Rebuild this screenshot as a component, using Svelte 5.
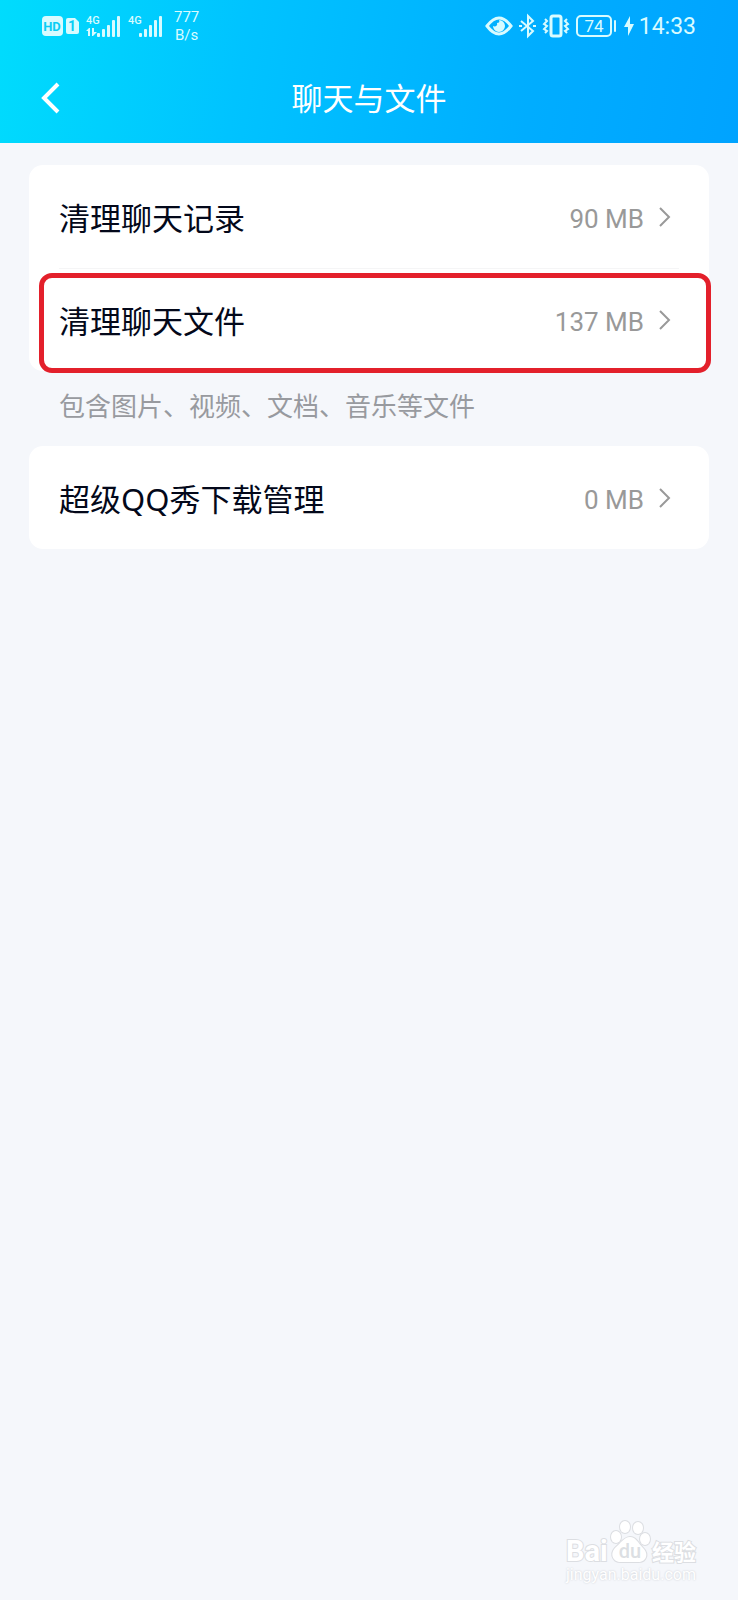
<script>
  const groups = [
    {
      note: '包含图片、视频、文档、音乐等文件',
      items: [
        { label: '清理聊天记录', size: '90 MB' },
        { label: '清理聊天文件', size: '137 MB', marked: true },
      ],
    },
    {
      items: [{ label: '超级QQ秀下载管理', size: '0 MB' }],
    },
  ];
</script>

{#snippet bars()}
  <rect x="11" y="18" width="3" height="4" rx="1" />
  <rect x="16" y="14" width="3" height="8" rx="1" />
  <rect x="21" y="10" width="3" height="12" rx="1" />
  <rect x="26" y="5" width="3" height="17" rx="1" />
  <rect x="31" y="1" width="3" height="21" rx="1" />
{/snippet}

<div class="page">
  <header class="header">
    <div class="status">
      <div class="status__left">
        <svg width="37" height="20" viewBox="0 0 37 20" fill="currentColor">
          <rect width="21" height="20" rx="4" />
          <path d="M26 2h7l4 4v10a2 2 0 0 1-2 2h-9a2 2 0 0 1-2-2V4a2 2 0 0 1 2-2z" />
          <text class="cut" x="10" y="15" font-size="13">HD</text>
          <text class="cut" x="30" y="15" font-size="14">1</text>
        </svg>
        <svg class="signal" width="35" height="23" viewBox="0 0 35 23" fill="currentColor">
          <text x="0" y="9" font-size="11">4G</text>
          <path d="M0 16l3-3h1v8H2v-5zM6 13h2v4h3l-4 4H6z" />
          {@render bars()}
        </svg>
        <svg class="signal" width="35" height="23" viewBox="0 0 35 23" fill="currentColor">
          <text x="0" y="9" font-size="11">4G</text>
          {@render bars()}
        </svg>
        <div class="speed"><span>777</span><span>B/s</span></div>
      </div>

      <div class="status__right">
        <svg width="26" height="20" viewBox="0 0 26 20">
          <path d="M1 10Q13-6 25 10Q13 26 1 10z" fill="none" stroke="currentColor" stroke-width="3" />
          <path d="M13 4a6 6 0 1 1-6 6c2 1 5 0 4-3 2 0 3-1 2-3z" fill="currentColor" />
        </svg>
        <svg width="17" height="24" viewBox="0 0 17 24" fill="none" stroke="currentColor" stroke-width="2">
          <path d="M2 7l12 10-5 5V2l5 5L2 17" />
          <path d="M0 12h3M14 12h3" />
        </svg>
        <svg width="26" height="22" viewBox="0 0 26 22" fill="none" stroke="currentColor" stroke-width="2">
          <rect x="8" y="1" width="10" height="20" rx="2" stroke-width="3" />
          <path d="M2 4l2 2-3 3 3 2-3 3 3 2-2 2M24 4l-2 2 3 3-3 2 3 3-3 2 2 2" />
        </svg>
        <svg width="41" height="22" viewBox="0 0 41 22">
          <rect x="1" y="1" width="34" height="20" rx="4" fill="none" stroke="currentColor" stroke-width="2" />
          <path d="M39 6v10" stroke="currentColor" stroke-width="2" stroke-linecap="round" />
          <text x="18" y="17" font-size="17" fill="currentColor" text-anchor="middle">74</text>
        </svg>
        <svg width="10" height="20" viewBox="0 0 10 20" fill="currentColor">
          <path d="M6 0v8h4L4 20v-9H0z" />
        </svg>
        <span class="time">14:33</span>
      </div>
    </div>

    <nav class="nav">
      <button class="back" type="button" aria-label="返回">
        <svg width="20" height="32" viewBox="0 0 20 32" fill="none" stroke="currentColor" stroke-width="4">
          <path d="M18 2L4 16l14 14" />
        </svg>
      </button>
      <h1 class="title">聊天与文件</h1>
    </nav>
  </header>

  <main class="content">
    {#each groups as group}
      <section class="group">
        <div class="card">
          {#each group.items as item}
            <button class="row" class:row--marked={item.marked} type="button">
              <span class="label">{item.label}</span>
              <span class="size">{item.size}</span>
              <svg class="arrow" width="12" height="20" viewBox="0 0 12 20" fill="none" stroke="currentColor" stroke-width="2">
                <path d="M1 1l9 9-9 9" />
              </svg>
            </button>
          {/each}
        </div>
        {#if group.note}
          <p class="note">{group.note}</p>
        {/if}
      </section>
    {/each}
  </main>

  <footer class="watermark">
    <svg width="132" height="46" viewBox="0 0 132 46">
      <g class="outline">
        <text x="0" y="41" font-size="29">Bai</text>
        <ellipse cx="50" cy="17" rx="5" ry="6" />
        <ellipse cx="59" cy="7" rx="5" ry="6" />
        <ellipse cx="72" cy="8" rx="5" ry="6" />
        <ellipse cx="79" cy="19" rx="5" ry="6" />
        <path d="M64 17c6 0 8 6 13 11 7 7 2 15-6 14H56c-8 1-13-7-7-14 6-5 9-11 15-11z" />
        <text class="cn" x="86" y="40" font-size="22">经验</text>
      </g>
      <text class="du" x="64" y="38" font-size="20">du</text>
    </svg>
    <span class="site">jingyan.baidu.com</span>
  </footer>
</div>

<style>
  :global(body) {
    margin: 0;
  }

  .page {
    min-height: 100vh;
    display: flex;
    flex-direction: column;
    background: #f5f7fb;
    font-family: Roboto, 'Noto Sans CJK SC', sans-serif;
  }

  svg {
    display: block;
    flex: none;
    overflow: visible;
  }

  .header {
    height: 143px;
    background: linear-gradient(100deg, #00dcfd 0%, #00c3ff 33%, #00adff 72%, #00a3ff 100%);
    color: #fff;
  }

  .status {
    display: flex;
    justify-content: space-between;
    height: 52px;
    padding: 0 42px;
    color: #d8fbff;
  }

  .status__left,
  .status__right {
    display: flex;
    align-items: center;
    gap: 7px;
  }

  .cut {
    fill: #0bcdf5;
    font-weight: 700;
    text-anchor: middle;
  }

  .signal {
    font-weight: 500;
  }

  .signal + .signal {
    margin-right: 4px;
  }

  .speed {
    display: flex;
    flex-direction: column;
    align-items: center;
    font-size: 15px;
    line-height: 18px;
  }

  .time {
    margin-left: -2px;
    font-size: 23px;
  }

  .nav {
    position: relative;
    display: flex;
    align-items: center;
    justify-content: center;
    height: 91px;
  }

  .back {
    position: absolute;
    left: 32px;
    padding: 8px;
    border: 0;
    background: transparent;
    color: inherit;
    cursor: pointer;
  }

  .title {
    margin: 0;
    padding-top: 4px;
    font-size: 31px;
    font-weight: 400;
    line-height: 44px;
  }

  .content {
    padding: 22px 29px;
  }

  .card {
    border-radius: 14px;
    background: #fff;
  }

  .row {
    position: relative;
    display: flex;
    align-items: center;
    width: 100%;
    height: 103px;
    padding: 0 38px 0 30px;
    border: 0;
    background: transparent;
    font-family: inherit;
    text-align: left;
    cursor: pointer;
  }

  .row + .row::before {
    content: '';
    position: absolute;
    top: 0;
    left: 30px;
    right: 30px;
    height: 1px;
    background: #f5f5f6;
  }

  .row--marked::after {
    content: '';
    position: absolute;
    inset: 5px -2px -2px 10px;
    border: 5px solid #e3202b;
    border-radius: 13px;
  }

  .label {
    flex: 1;
    padding-top: 2px;
    font-family: 'Noto Sans', 'Noto Sans CJK SC', sans-serif;
    font-size: 31px;
    line-height: 44px;
    color: #03081a;
  }

  .size {
    margin-right: 15px;
    padding-top: 4px;
    font-size: 26px;
    color: #999;
  }

  .arrow {
    color: #999;
  }

  .note {
    margin: 0;
    padding: 16px 30px 19px;
    font-size: 26px;
    line-height: 40px;
    color: #989a9f;
  }

  .watermark {
    display: flex;
    flex-direction: column;
    align-items: flex-start;
    align-self: flex-end;
    margin-top: auto;
    padding: 0 40px 16px 0;
  }

  .outline {
    fill: #fff;
    stroke: #dcdee2;
    stroke-width: 2;
    paint-order: stroke;
    font-weight: 700;
  }

  .cn {
    font-family: 'Noto Sans CJK SC', sans-serif;
  }

  .du {
    fill: #dcdfe3;
    font-weight: 500;
    text-anchor: middle;
  }

  .site {
    font-size: 16px;
    line-height: 18px;
    color: #fff;
    text-shadow: 0 0 2px #c6c9ce;
  }
</style>
